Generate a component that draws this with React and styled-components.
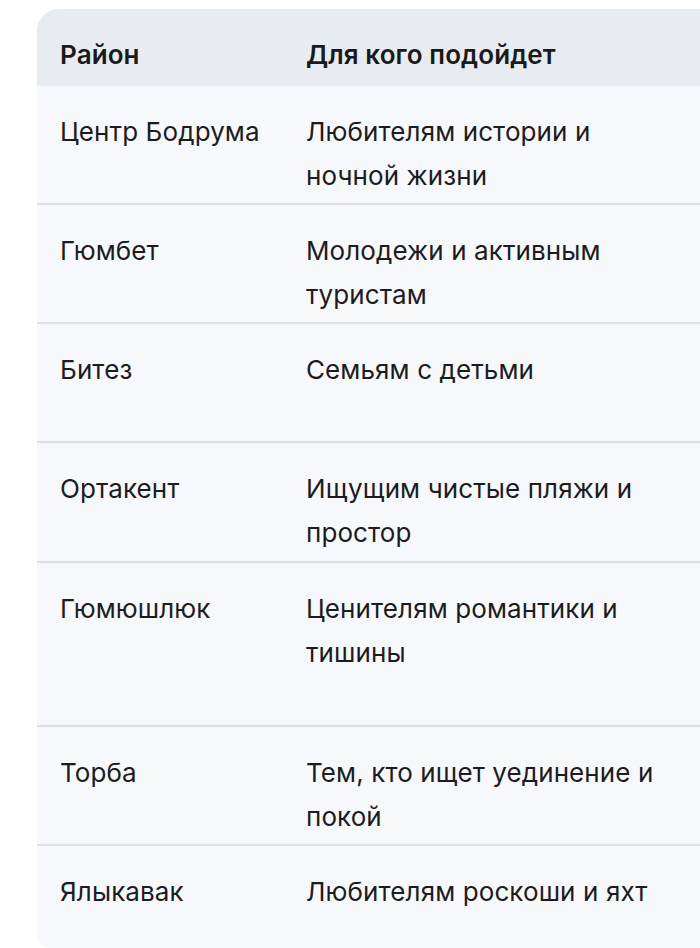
import React from 'react';
import styled, { createGlobalStyle } from 'styled-components';

const rows = [
  { id: 1, area: 'Центр Бодрума', who: 'Любителям истории и ночной жизни', height: 119 },
  { id: 2, area: 'Гюмбет', who: 'Молодежи и активным туристам', height: 119 },
  { id: 3, area: 'Битез', who: 'Семьям с детьми', height: 119 },
  { id: 4, area: 'Ортакент', who: 'Ищущим чистые пляжи и простор', height: 120 },
  { id: 5, area: 'Гюмюшлюк', who: 'Ценителям романтики и тишины', height: 164 },
  { id: 6, area: 'Торба', who: 'Тем, кто ищет уединение и покой', height: 119 },
  { id: 7, area: 'Ялыкавак', who: 'Любителям роскоши и яхт', height: 102, last: true },
];

const App = () => {
  return (
    <>
      <GlobalStyle />
      <Page>
        <Card>
          <HeadRow>
            <HeadCell>Район</HeadCell>
            <HeadCell>Для кого подойдет</HeadCell>
          </HeadRow>
          {rows.map((row) => (
            <Row key={row.id} $height={row.height} $last={row.last}>
              <Cell>{row.area}</Cell>
              <Cell $wide>{row.who}</Cell>
            </Row>
          ))}
        </Card>
      </Page>
    </>
  );
};

const GlobalStyle = createGlobalStyle`
  html, body {
    margin: 0;
    padding: 0;
    background: #ffffff;
    overflow: hidden;
  }
  body {
    font-family: Inter, "Noto Sans", "Liberation Sans", sans-serif;
    color: #1c1c1e;
  }
`;

const Page = styled.div`
  width: 700px;
  height: 948px;
  padding: 9px 0 0 37px;
  box-sizing: border-box;
  overflow: hidden;
`;

const Card = styled.div`
  width: 760px;
  border-radius: 22px 0 0 14px;
  overflow: hidden;
  background: #f7f8fb;
`;

const HeadRow = styled.div`
  display: grid;
  grid-template-columns: 246px 1fr;
  height: 77px;
  background: #e8ecf1;
`;

const Row = styled.div`
  display: grid;
  grid-template-columns: 246px 1fr;
  height: ${(p) => p.$height}px;
  box-sizing: border-box;
  border-bottom: ${(p) => (p.$last ? 'none' : '2px solid #dcdee1')};
  background: #f7f8fb;
`;

const Cell = styled.div`
  padding: 24px 23px 0 23px;
  font-size: 26px;
  line-height: 44px;
  font-weight: 400;
  letter-spacing: 0.1px;
  color: #1c1c1e;
  max-width: ${(p) => (p.$wide ? '410px' : 'none')};
  box-sizing: border-box;
`;

const HeadCell = styled(Cell)`
  font-weight: 600;
  color: #1a1a1a;
`;

export default App;
